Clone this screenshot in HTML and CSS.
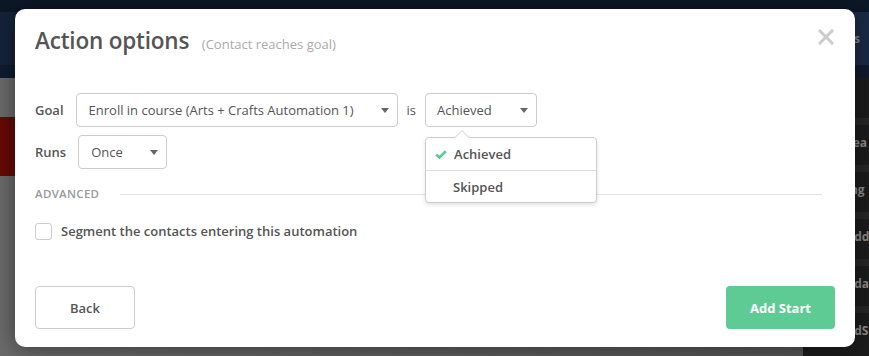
FILE: index.html
```html
<!DOCTYPE html>
<html lang="en">
<head>
    <meta charset="UTF-8">
    <meta name="viewport" content="width=device-width, initial-scale=1.0">
    <title>Action options</title>
    <link rel="stylesheet" href="styles.css">
</head>
<body>
    <!-- page behind the modal -->
    <div class="app">
        <header class="topbar">
            <div class="topbar-nav">Tags</div>
        </header>
        <div class="workspace">
            <main class="canvas">
                <div class="canvas-banner"></div>
            </main>
            <aside class="sidebar">
                <div class="sidebar-head"></div>
                <div class="sidebar-item">Lea</div>
                <div class="sidebar-item">Ing</div>
                <div class="sidebar-item">Add</div>
                <div class="sidebar-item">Ada</div>
                <div class="sidebar-item">AdS</div>
            </aside>
        </div>
    </div>

    <div class="overlay">
        <div class="modal">
            <div class="modal-header">
                <h2 class="modal-title">Action options <small>(Contact reaches goal)</small></h2>
                <button class="modal-close" aria-label="Close">
                    <svg width="16" height="16" viewBox="0 0 16 16"><path d="M2 2L14 14M14 2L2 14" stroke="#cccccc" stroke-width="3" stroke-linecap="square"/></svg>
                </button>
            </div>

            <div class="modal-body">
                <div class="field-row">
                    <label class="field-label">Goal</label>
                    <div class="select select-goal">Enroll in course (Arts + Crafts Automation 1) <span class="caret"></span></div>
                    <span class="field-sep">is</span>
                    <div class="select-wrap">
                        <div class="select select-status">Achieved <span class="caret"></span></div>
                        <ul class="dropdown-menu">
                            <li class="dropdown-item active">
                                <svg class="check" width="12" height="9" viewBox="0 0 12 9"><path d="M1.3 4.6L4.4 7.4L10.8 1.2" fill="none" stroke="#5cc98f" stroke-width="2.6"/></svg>
                                Achieved
                            </li>
                            <li class="dropdown-item">Skipped</li>
                        </ul>
                    </div>
                </div>

                <div class="field-row">
                    <label class="field-label">Runs</label>
                    <div class="select select-runs">Once <span class="caret"></span></div>
                </div>

                <div class="section-divider"><span>ADVANCED</span></div>

                <label class="checkbox-row">
                    <span class="checkbox"></span>
                    Segment the contacts entering this automation
                </label>
            </div>

            <div class="modal-footer">
                <button class="btn btn-default">Back</button>
                <button class="btn btn-primary">Add Start</button>
            </div>
        </div>
    </div>
</body>
</html>
```

FILE: styles.css
```css
/* Reset */
* {
    margin: 0;
    padding: 0;
    box-sizing: border-box;
}

body {
    font-family: 'Open Sans', 'Liberation Sans', sans-serif;
    width: 869px;
    height: 356px;
    overflow: hidden;
    position: relative;
    background: #5e5e5e;
}

/* Page behind the overlay */
.app {
    display: flex;
    flex-direction: column;
    height: 100%;
}

.topbar {
    height: 78px;
    flex-shrink: 0;
    background: linear-gradient(#0c1727 0, #0c1727 12px, #14233a 12px, #14233a 65px, #0f1b2e 65px);
    display: flex;
    justify-content: flex-end;
}

.topbar-nav {
    width: 66px;
    margin-top: 12px;
    height: 53px;
    background: #1b2b46;
    color: #7d8798;
    font-size: 12px;
    font-weight: 700;
    line-height: 53px;
    padding-left: 30px;
}

.workspace {
    flex: 1;
    display: flex;
}

.canvas {
    flex: 1;
    background: linear-gradient(90deg, #6a6a6a 0%, #555 100%);
}

.canvas-banner {
    margin-top: 39px;
    height: 59px;
    background: #650a04;
}

.sidebar {
    width: 66px;
    background: #1c1c1c;
}

.sidebar-head {
    height: 40px;
}

.sidebar-item {
    height: 47px;
    border-top: 7px solid #272727;
    color: #8a8a8a;
    font-size: 12px;
    font-weight: 700;
    line-height: 36px;
    padding-left: 43px;
    white-space: nowrap;
}

/* Modal */
.overlay {
    position: absolute;
    top: 0;
    left: 0;
    right: 0;
    bottom: 0;
    display: flex;
    padding: 9px 14px 9px 15px;
}

.modal {
    flex: 1;
    background: #fff;
    border-radius: 10px;
    box-shadow: 0 2px 22px rgba(0, 0, 0, 0.45);
    display: flex;
    flex-direction: column;
    padding: 16px 20px 18px;
    color: #555;
}

.modal-header {
    display: flex;
    justify-content: space-between;
    align-items: flex-start;
    height: 32px;
}

.modal-title {
    font-size: 22.5px;
    font-weight: 600;
    line-height: 32px;
    color: #555;
    letter-spacing: -0.2px;
}

.modal-title small {
    font-size: 13px;
    font-weight: 400;
    line-height: 1;
    color: #aaa;
    margin-left: 7px;
    letter-spacing: 0;
}

.modal-close {
    background: none;
    border: none;
    margin-top: 4px;
    margin-right: 1px;
    width: 16px;
    height: 16px;
    cursor: pointer;
}

.modal-close svg {
    display: block;
}

.modal-body {
    margin-top: 36px;
}

/* Form rows */
.field-row {
    display: flex;
    align-items: center;
    height: 34px;
}

.field-row + .field-row {
    margin-top: 8px;
}

.field-label {
    font-size: 13px;
    font-weight: 600;
    margin-right: 12px;
}

.field-sep {
    font-size: 13px;
    margin: 0 9px;
}

.select {
    height: 34px;
    border: 1px solid #ccc;
    border-radius: 4px;
    padding: 0 8px 0 12px;
    display: flex;
    align-items: center;
    justify-content: space-between;
    font-size: 13px;
    color: #555;
    background: #fff;
}

.select-goal { width: 322px; }
.select-status { width: 112px; padding-left: 11px; }
.select-runs { width: 89px; }

.caret {
    width: 0;
    height: 0;
    border-top: 5px solid #666;
    border-left: 4.5px solid transparent;
    border-right: 4.5px solid transparent;
}

.select-wrap {
    position: relative;
}

/* Dropdown menu */
.dropdown-menu {
    position: absolute;
    top: 44px;
    left: 0;
    width: 172px;
    list-style: none;
    background: #fff;
    border: 1px solid #ccc;
    border-radius: 4px;
    box-shadow: 0 2px 4px rgba(0, 0, 0, 0.12);
    z-index: 2;
}

.dropdown-menu::before,
.dropdown-menu::after {
    content: '';
    position: absolute;
    left: 28px;
    width: 0;
    height: 0;
    border-left: 8px solid transparent;
    border-right: 8px solid transparent;
}

.dropdown-menu::before {
    top: -8px;
    border-bottom: 8px solid #ccc;
}

.dropdown-menu::after {
    top: -7px;
    border-bottom: 8px solid #fff;
}

.dropdown-item {
    position: relative;
    height: 32px;
    line-height: 32px;
    padding-left: 28px;
    font-size: 13px;
    font-weight: 600;
    color: #555;
}

.dropdown-item + .dropdown-item {
    border-top: 1px solid #ddd;
    height: 32px;
    padding-left: 27px;
}

.dropdown-item .check {
    position: absolute;
    left: 9px;
    top: 12px;
}

/* Advanced divider */
.section-divider {
    display: flex;
    align-items: center;
    margin-top: 17px;
    margin-right: 13px;
    font-size: 11.5px;
    font-weight: 600;
    color: #999;
    line-height: 16px;
}

.section-divider span {
    margin-right: 21px;
    letter-spacing: 0.3px;
}

.section-divider::after {
    content: '';
    flex: 1;
    height: 1px;
    background: #e2e2e2;
}

.checkbox-row {
    display: flex;
    align-items: center;
    margin-top: 21px;
    font-size: 13px;
    font-weight: 600;
    color: #555;
    line-height: 17px;
}

.checkbox {
    width: 17px;
    height: 17px;
    border: 1px solid #ccc;
    border-radius: 3px;
    margin-right: 9px;
}

/* Footer */
.modal-footer {
    margin-top: auto;
    display: flex;
    justify-content: space-between;
}

.btn {
    height: 43px;
    border-radius: 4px;
    font-family: inherit;
    font-size: 13px;
    font-weight: 600;
    cursor: pointer;
}

.btn-default {
    width: 100px;
    background: #fff;
    border: 1px solid #ccc;
    color: #555;
}

.btn-primary {
    width: 109px;
    background: #5ecb95;
    border: none;
    color: #fff;
    font-weight: 700;
}
```
